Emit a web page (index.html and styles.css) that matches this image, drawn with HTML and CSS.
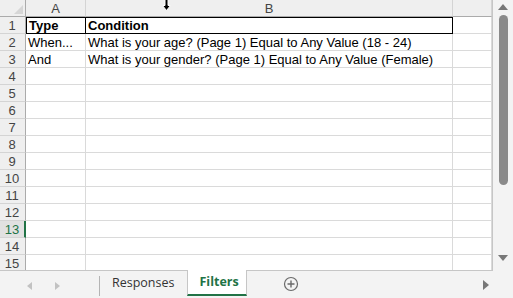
FILE: index.html
```html
<!DOCTYPE html>
<html lang="en">
  <head>
    <meta charset="UTF-8" />
    <title>Filters</title>
    <link rel="stylesheet" href="styles.css">
  </head>
  <body>
    <div class="app">
      <div class="main">
        <div class="sheet">
          <div class="hd corner"><span class="corner-tri"></span></div>
          <div class="hd col">A</div>
          <div class="hd col">B</div>
          <div class="hd col"></div>

          <div class="hd row">1</div>
          <div class="cell first bold">Type</div>
          <div class="cell first last bold">Condition</div>
          <div class="cell"></div>

          <div class="hd row">2</div>
          <div class="cell">When...</div>
          <div class="cell">What is your age? (Page 1) Equal to Any Value (18 - 24)</div>
          <div class="cell"></div>

          <div class="hd row">3</div>
          <div class="cell">And</div>
          <div class="cell">What is your gender? (Page 1) Equal to Any Value (Female)</div>
          <div class="cell"></div>
        </div>
        <div class="vscroll">
          <span class="tri up"></span>
          <div class="thumb"></div>
          <span class="tri down"></span>
        </div>
      </div>
      <div class="tabbar">
        <div class="nav">
          <span class="tri left"></span>
          <span class="tri right"></span>
        </div>
        <div class="tab">Responses</div>
        <div class="tab active">Filters</div>
        <div class="add">
          <svg width="16" height="16" viewBox="0 0 16 16">
            <circle cx="8" cy="8" r="6.5" fill="none" stroke="#6a6a6a" stroke-width="1.2"/>
            <path d="M8 4.5v7M4.5 8h7" stroke="#6a6a6a" stroke-width="1.4"/>
          </svg>
        </div>
        <span class="tri right dark"></span>
      </div>
    </div>
    <svg class="cursor" width="9" height="12" viewBox="0 0 9 12">
      <path d="M3 0.5h3v6h2.5l-4 5-4-5h2.5z" fill="#000" stroke="#fff" stroke-width="1"/>
    </svg>

    <script>
      // fill the empty rows 4..15
      const sheet = document.querySelector(".sheet");
      for (let i = 4; i <= 15; i++) {
        const r = document.createElement("div");
        r.className = "hd row" + (i === 13 ? " sel" : "");
        r.textContent = i;
        sheet.appendChild(r);
        for (let c = 0; c < 3; c++) {
          const d = document.createElement("div");
          d.className = "cell";
          sheet.appendChild(d);
        }
      }
    </script>
  </body>
</html>
```

FILE: styles.css
```css
body {
  margin: 0;
  font-family: "Liberation Sans", Arial, sans-serif;
  overflow: hidden;
}

.app {
  width: 513px;
  height: 298px;
  display: flex;
  flex-direction: column;
  background-color: #f3f3f3;
}

.main {
  display: flex;
  height: 271px;
}

.sheet {
  display: grid;
  grid-template-columns: 26px 60px 367px 39px;
  grid-template-rows: 17px repeat(15, 17px);
  background-color: #fff;
  border-right: 1px solid #c6c6c6;
  border-bottom: 1px solid #c6c6c6;
  box-sizing: border-box;
  width: 493px;
  height: 271px;
  overflow: hidden;
}

.hd {
  background-color: #efefef;
  color: #444;
  font-size: 13px;
  display: flex;
  align-items: center;
  justify-content: center;
  box-sizing: border-box;
}

.col {
  border-right: 1px solid #d4d4d4;
  border-bottom: 1px solid #ababab;
  padding-top: 1px;
}

.corner {
  border-right: 1px solid #ababab;
  border-bottom: 1px solid #ababab;
  position: relative;
}

.corner-tri {
  position: absolute;
  right: 2px;
  bottom: 2px;
  width: 0;
  height: 0;
  border-left: 9px solid transparent;
  border-bottom: 9px solid #d6d6d6;
}

.row {
  border-right: 1px solid #ababab;
  border-bottom: 1px solid #d4d4d4;
  padding-right: 1px;
}

.row.sel {
  background-color: #e1e1e1;
  color: #217346;
  border-right: 2px solid #217346;
  padding-right: 0;
}

.cell {
  border-right: 1px solid #dadada;
  border-bottom: 1px solid #dadada;
  box-sizing: border-box;
  font-size: 13px;
  color: #000;
  padding: 1px 0 0 2px;
  line-height: 15px;
  white-space: nowrap;
  overflow: hidden;
}

.cell.first {
  border-right-color: #000;
  border-bottom-color: #000;
  box-shadow: inset 0 1px 0 #000;
}

.row + .cell.first {
  box-shadow: inset 0 1px 0 #000, inset 1px 0 0 #000;
  padding-left: 3px;
}

.bold {
  font-weight: bold;
}

.vscroll {
  width: 20px;
  display: flex;
  flex-direction: column;
  align-items: center;
  padding-top: 4px;
  box-sizing: border-box;
}

.thumb {
  width: 9px;
  height: 170px;
  margin-top: 5px;
  border-radius: 5px;
  background-color: #8a8a8a;
}

.tri {
  width: 0;
  height: 0;
  display: inline-block;
}

.tri.up {
  border-left: 5px solid transparent;
  border-right: 5px solid transparent;
  border-bottom: 6px solid #777;
}

.tri.down {
  margin-top: auto;
  margin-bottom: 10px;
  border-left: 5px solid transparent;
  border-right: 5px solid transparent;
  border-top: 6px solid #777;
}

.tabbar {
  flex: 1;
  display: flex;
  align-items: flex-start;
  position: relative;
}

.nav {
  width: 100px;
  height: 20px;
  margin-top: 5px;
  display: flex;
  align-items: center;
  gap: 23px;
  padding-left: 27px;
  box-sizing: border-box;
  border-right: 1px solid #b4b4b4;
}

.tri.left {
  border-top: 4px solid transparent;
  border-bottom: 4px solid transparent;
  border-right: 5px solid #c2c2c2;
}

.tri.right {
  border-top: 4px solid transparent;
  border-bottom: 4px solid transparent;
  border-left: 5px solid #c2c2c2;
}

.tri.right.dark {
  position: absolute;
  right: 24px;
  top: 9px;
  border-top-width: 5px;
  border-bottom-width: 5px;
  border-left: 6px solid #777;
}

.tab {
  font-family: "Open Sans", "Noto Sans", sans-serif;
  font-size: 12.5px;
  color: #333;
  height: 25px;
  line-height: 24px;
  padding: 0 13px 0 12px;
  box-sizing: border-box;
}

.tab.active {
  background-color: #fff;
  color: #217346;
  font-weight: bold;
  margin-top: -1px;
  height: 26px;
  padding: 0 7px 0 11px;
  border-left: 1px solid #c6c6c6;
  border-right: 1px solid #c6c6c6;
  border-bottom: 2px solid #217346;
}

.add {
  margin-left: 36px;
  margin-top: 5px;
}

.cursor {
  position: absolute;
  left: 162px;
  top: -1px;
}
```
